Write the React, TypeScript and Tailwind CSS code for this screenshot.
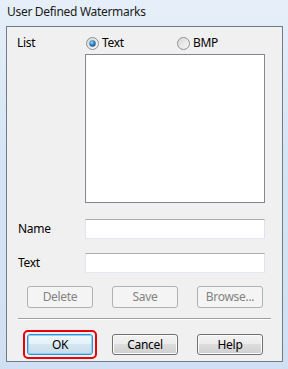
function Radio({ checked }: { checked: boolean }) {
  return (
    <svg width="13" height="13" viewBox="0 0 13 13" className="shrink-0">
      <defs>
        <linearGradient id={checked ? "rbgOn" : "rbgOff"} x1="0" y1="0" x2="1" y2="1">
          <stop offset="0" stopColor="#d8d8d8" />
          <stop offset="1" stopColor="#f8f8f8" />
        </linearGradient>
        <radialGradient id="dot" cx="0.4" cy="0.35" r="0.7">
          <stop offset="0" stopColor="#a9dcf9" />
          <stop offset="0.5" stopColor="#2c86c7" />
          <stop offset="1" stopColor="#1b4f80" />
        </radialGradient>
      </defs>
      <circle cx="6.5" cy="6.5" r="6" fill={`url(#${checked ? "rbgOn" : "rbgOff"})`} stroke="#8e8f8f" strokeWidth="1" />
      {checked && <circle cx="6.5" cy="6.5" r="3.2" fill="url(#dot)" />}
    </svg>
  );
}

function WinButton({
  label,
  disabled,
  focused,
}: {
  label: string;
  disabled?: boolean;
  focused?: boolean;
}) {
  const base = "w-[66px] flex items-center justify-center rounded-[3px] border";
  if (disabled) {
    return (
      <div className={`${base} h-[22px] border-[#adb2b5] bg-[#f4f4f4] text-[#838383]`}>
        {label}
      </div>
    );
  }
  if (focused) {
    return (
      <div
        className={`${base} h-[21px] border-[#3c8fcf] bg-[linear-gradient(#eef7fc_0%,#e4f1f9_50%,#d4e6f1_50%,#c8dcea_100%)] shadow-[inset_0_0_0_1px_#7fd6f7] text-black`}
      >
        {label}
      </div>
    );
  }
  return (
    <div
      className={`${base} h-[21px] border-[#707070] bg-[linear-gradient(#f2f2f2_0%,#ebebeb_50%,#dddddd_50%,#cfcfcf_100%)] shadow-[inset_0_0_0_1px_#fcfcfc] text-black`}
    >
      {label}
    </div>
  );
}

export default function App() {
  return (
    <div className="w-[288px] h-[369px] bg-[linear-gradient(180deg,#e6eff9_0%,#d6e5f5_40%,#d0e0f2_100%)] font-['Segoe_UI','Noto_Sans',sans-serif] text-[12px] tracking-[-0.3px] leading-none text-black flex flex-col">
      <div className="h-[26px] pl-[7px] pt-[6px] text-[12px] text-[#1a1a1a]">User Defined Watermarks</div>

      <div className="ml-[6px] w-[277px] h-[336px] border border-[#6f7c89] bg-[#f0f0f0] flex flex-col">
        {/* List + radios */}
        <div className="mt-[10px] h-[12px] flex items-center">
          <div className="w-[79px] pl-[10px]">List</div>
          <div className="w-[91px] flex items-center gap-[3px]">
            <Radio checked />
            <span>Text</span>
          </div>
          <div className="flex items-center gap-[3px]">
            <Radio checked={false} />
            <span>BMP</span>
          </div>
        </div>

        <div className="mt-[5px] ml-[78px] w-[180px] h-[149px] border border-[#828790] bg-white" />

        {/* Name */}
        <div className="mt-[16px] flex items-center">
          <div className="w-[78px] pl-[11px]">Name</div>
          <div className="w-[180px] h-[20px] border border-[#e2e3ea] border-t-[#abadb3] border-b-[#e3e9ef] bg-white" />
        </div>

        {/* Text */}
        <div className="mt-[14px] flex items-center">
          <div className="w-[78px] pl-[11px]">Text</div>
          <div className="w-[180px] h-[20px] border border-[#e2e3ea] border-t-[#abadb3] border-b-[#e3e9ef] bg-white" />
        </div>

        <div className="mt-[13px] pl-[20px] flex gap-[19px]">
          <WinButton label="Delete" disabled />
          <WinButton label="Save" disabled />
          <WinButton label="Browse..." disabled />
        </div>

        <div className="mt-[10px] ml-[11px] w-[253px] h-[2px] border-t border-t-[#a0a0a0] border-b border-b-[#ffffff]" />

        <div className="mt-[14px] pl-[20px] flex gap-[19px]">
          <div className="relative">
            <WinButton label="OK" focused />
            <div className="absolute -left-[4px] -top-[4px] -right-[4px] -bottom-[4px] rounded-[5px] border-2 border-[#e8000b]" />
          </div>
          <WinButton label="Cancel" />
          <WinButton label="Help" />
        </div>
      </div>
    </div>
  );
}
